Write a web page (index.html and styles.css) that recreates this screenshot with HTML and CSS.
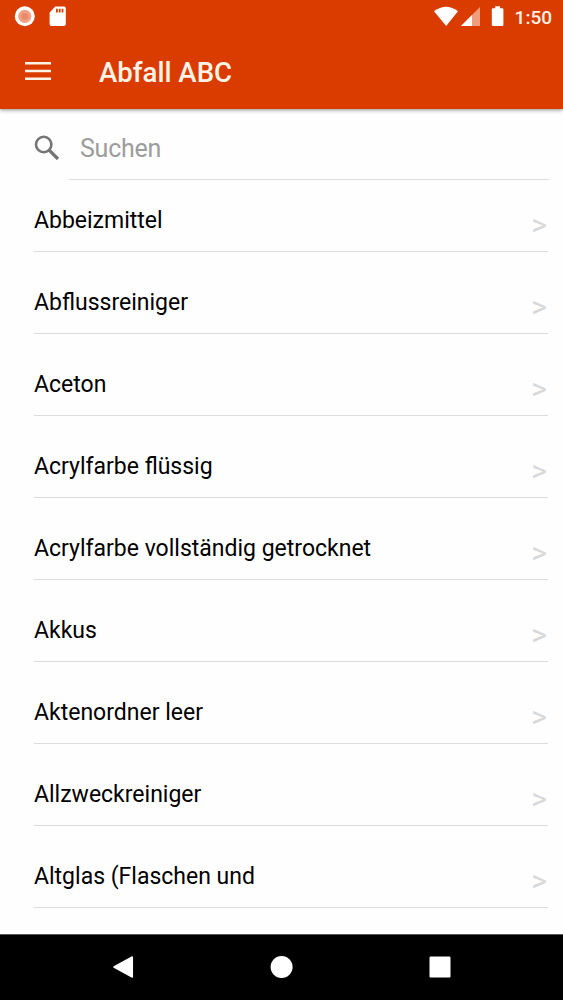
FILE: index.html
```html
<!DOCTYPE html>
<html lang="de">
<head>
<meta charset="utf-8">
<title>Abfall ABC</title>
<link rel="stylesheet" href="styles.css">
</head>
<body>
<div class="screen">
  <header class="header">
    <div class="status">
      <svg class="status-left" width="80" height="33" viewBox="0 0 80 33">
        <circle cx="24.8" cy="16.3" r="10" fill="#fff"/>
        <circle cx="24.8" cy="16.3" r="6.6" fill="#f0a183"/>
        <circle cx="24.8" cy="16.3" r="3.4" fill="#ea8a68"/>
        <path d="M55.3 6.6H64a1.8 1.8 0 0 1 1.8 1.8v15.8A1.8 1.8 0 0 1 64 26H51.4a1.8 1.8 0 0 1-1.8-1.8V12.4z" fill="#fff"/>
        <path d="M56 8.8h1.8v3.8H56zM58.8 8.8h1.8v3.8h-1.8zM61.6 8.8h1.8v3.8h-1.8z" fill="#da3c00"/>
      </svg>
      <svg class="status-right" width="76" height="33" viewBox="0 0 76 33">
        <path d="M0 11.2Q12 2.2 24 11.2L12.2 26z" fill="#fff"/>
        <path d="M46 7v19H27z" fill="#ef9d7d"/>
        <path d="M38 15v11H27z" fill="#fff"/>
        <path d="M61.2 6.2h4.8v2h2.2a1.2 1.2 0 0 1 1.2 1.2v15.3a1.2 1.2 0 0 1-1.2 1.2H59a1.2 1.2 0 0 1-1.2-1.2V9.4a1.2 1.2 0 0 1 1.2-1.2h2.2z" fill="#fff"/>
      </svg>
      <span class="clock">1:50</span>
    </div>
    <div class="appbar">
      <svg class="menu" width="26" height="20" viewBox="0 0 26 20">
        <path d="M0 2.3h26M0 10h26M0 17.7h26" stroke="#fff3e8" stroke-width="2.5"/>
      </svg>
      <h1 class="title">Abfall ABC</h1>
    </div>
  </header>
  <div class="search">
    <svg class="search-icon" width="26" height="26" viewBox="0 0 26 26">
      <circle cx="9.7" cy="9.5" r="7.7" fill="none" stroke="#757575" stroke-width="2.6"/>
      <path d="M15 15l9 9" stroke="#757575" stroke-width="3.2"/>
    </svg>
    <div class="field">Suchen</div>
  </div>
  <ul class="list">
    <li class="row"><span class="label">Abbeizmittel</span><span class="arrow">&gt;</span></li>
    <li class="row"><span class="label">Abflussreiniger</span><span class="arrow">&gt;</span></li>
    <li class="row"><span class="label">Aceton</span><span class="arrow">&gt;</span></li>
    <li class="row"><span class="label">Acrylfarbe flüssig</span><span class="arrow">&gt;</span></li>
    <li class="row"><span class="label">Acrylfarbe vollständig getrocknet</span><span class="arrow">&gt;</span></li>
    <li class="row"><span class="label">Akkus</span><span class="arrow">&gt;</span></li>
    <li class="row"><span class="label">Aktenordner leer</span><span class="arrow">&gt;</span></li>
    <li class="row"><span class="label">Allzweckreiniger</span><span class="arrow">&gt;</span></li>
    <li class="row"><span class="label">Altglas (Flaschen und</span><span class="arrow">&gt;</span></li>
  </ul>
  <nav class="navbar">
    <svg width="22" height="24" viewBox="0 0 22 24"><path d="M20.3 2v20L2 12z" fill="#fff" stroke="#fff" stroke-width="1.5" stroke-linejoin="round"/></svg>
    <svg width="24" height="24" viewBox="0 0 24 24"><circle cx="11.6" cy="12" r="11" fill="#fff"/></svg>
    <svg width="22" height="24" viewBox="0 0 22 24"><rect x=".5" y="1.5" width="21" height="21" rx="1.2" fill="#fff"/></svg>
  </nav>
</div>
</body>
</html>
```
FILE: styles.css
```css
* { box-sizing: border-box; }

body {
  margin: 0;
  font-family: Roboto, "Noto Sans", sans-serif;
  background: #fefefe;
}

.screen {
  display: flex;
  flex-direction: column;
  width: 563px;
  height: 1000px;
  overflow: hidden;
}

.header {
  height: 109px;
  flex: none;
  background: #da3c00;
  box-shadow: 0 1px 4px rgba(0, 0, 0, .45);
}

.status {
  display: flex;
  height: 33px;
  padding-right: 11px;
}

.status-right { margin-left: auto; }

.clock {
  width: 42px;
  text-align: right;
  white-space: nowrap;
  font-size: 19px;
  font-weight: 500;
  line-height: 35px;
  color: #fff3e8;
}

.appbar {
  display: flex;
  align-items: center;
  height: 76px;
  padding-left: 25px;
}

.title {
  margin: 3px 0 0 48px;
  font-size: 27.6px;
  font-weight: 500;
  line-height: 32px;
  color: #fff3e8;
}

.search {
  display: flex;
  flex: none;
  height: 71px;
  padding: 0 14px 0 34px;
}

.search-icon { margin-top: 26px; }

.field {
  flex: 1;
  margin-left: 9px;
  padding-left: 11px;
  border-bottom: 1px solid #dedede;
  font-size: 25px;
  letter-spacing: -.25px;
  line-height: 80px;
  color: #9c9c9c;
}

.list {
  flex: 1;
  margin: 0;
  padding: 0 15px 0 34px;
  list-style: none;
}

.row {
  display: flex;
  justify-content: space-between;
  height: 82.06px;
  padding-top: 24px;
  border-bottom: 1.5px solid #dcdcdc;
}

.row:first-child {
  height: 72px;
  padding-top: 14px;
}

.label {
  font-size: 23px;
  line-height: 53.5px;
  color: #000;
}

.arrow {
  margin-right: 1px;
  font-size: 30px;
  line-height: 61px;
  color: #d8d8d8;
}

.navbar {
  display: flex;
  flex: none;
  justify-content: space-between;
  align-items: center;
  height: 66px;
  padding: 0 112px 1px;
  border-top: 1px solid #555;
  background: #000;
}
```
